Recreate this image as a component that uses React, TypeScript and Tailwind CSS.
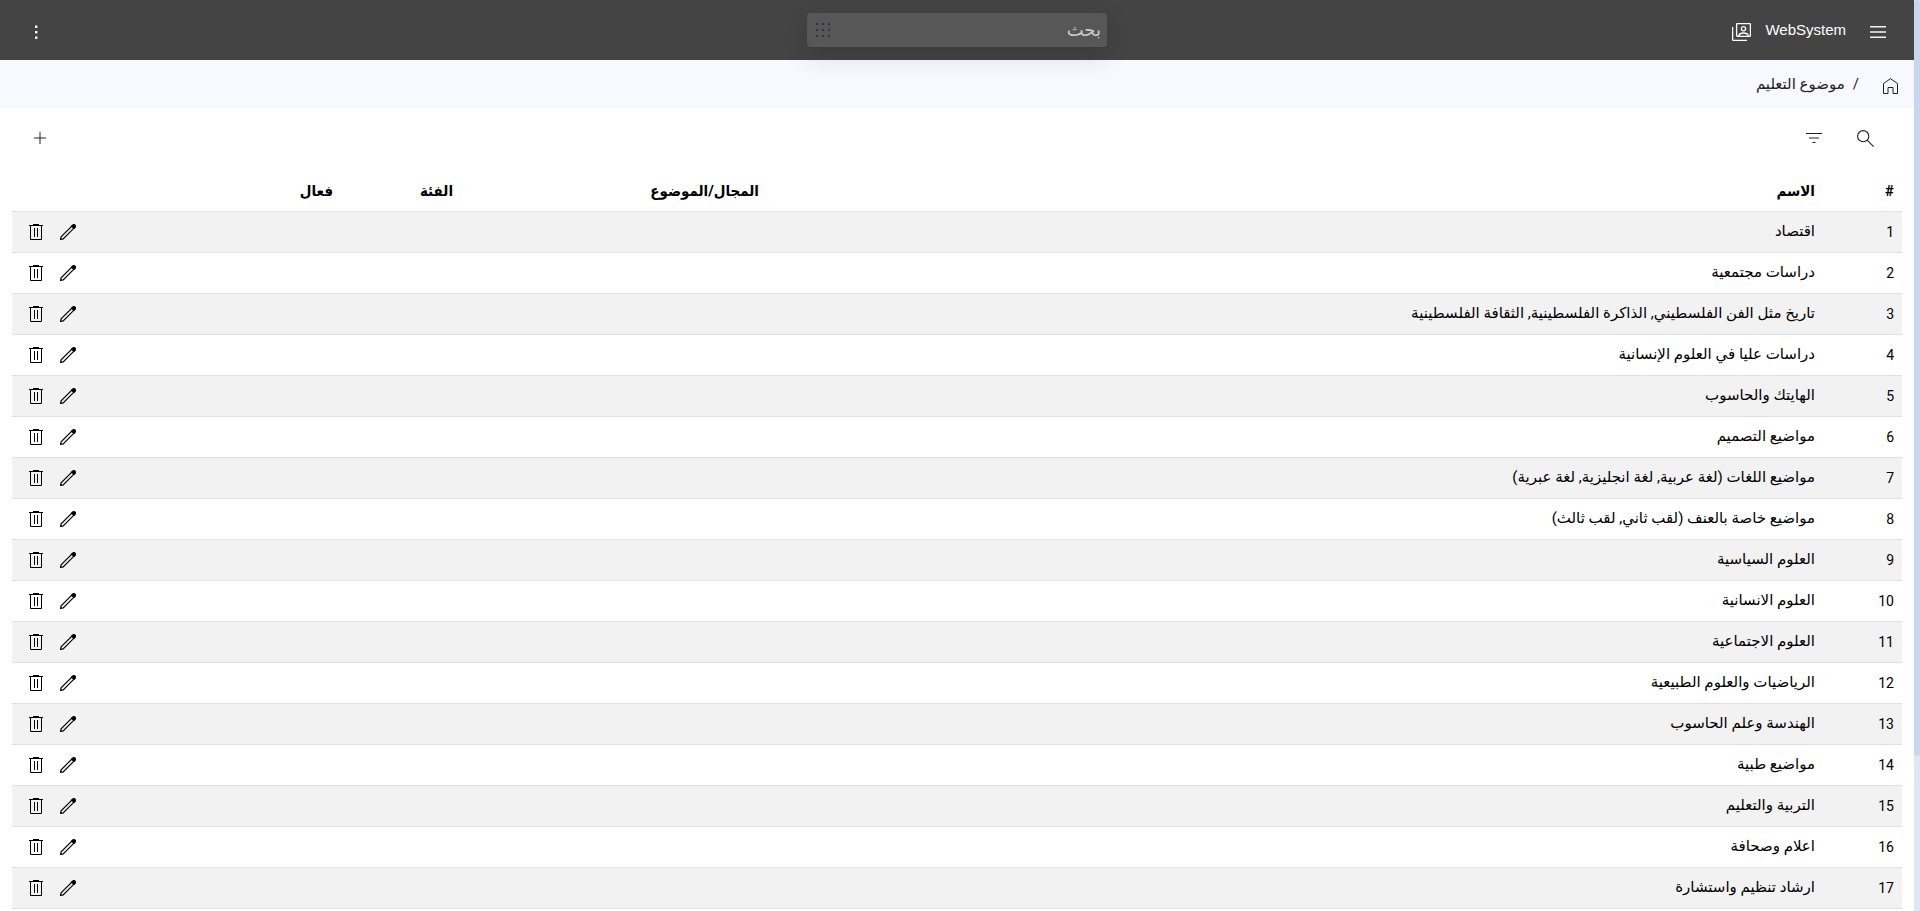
const FONT = "font-[Roboto,'DejaVu_Sans',sans-serif]";
const HEAD_FONT = "font-[Roboto,'DejaVu_Sans_Condensed','DejaVu_Sans',sans-serif]";

const subjects = [
  "اقتصاد",
  "دراسات مجتمعية",
  "تاريخ مثل الفن الفلسطيني, الذاكرة الفلسطينية, الثقافة الفلسطينية",
  "دراسات عليا في العلوم الإنسانية",
  "الهايتك والحاسوب",
  "مواضيع التصميم",
  "مواضيع اللغات (لغة عربية, لغة انجليزية, لغة عبرية)",
  "مواضيع خاصة بالعنف (لقب ثاني, لقب ثالث)",
  "العلوم السياسية",
  "العلوم الانسانية",
  "العلوم الاجتماعية",
  "الرياضيات والعلوم الطبيعية",
  "الهندسة وعلم الحاسوب",
  "مواضيع طبية",
  "التربية والتعليم",
  "اعلام وصحافة",
  "ارشاد تنظيم واستشارة",
];

function MenuIcon() {
  return (
    <svg width="16" height="12" viewBox="0 0 16 12" fill="none" stroke="#f2f2f2">
      <path d="M0 .8h16M0 6h16M0 11.2h16" strokeWidth="1.4" />
    </svg>
  );
}

function ContactsIcon() {
  return (
    <svg width="19" height="18" viewBox="0 0 19 18" fill="none" stroke="#fff" strokeWidth="1.3">
      <path d="M4.6 1.4q0-.8.8-.8h12.2q.8 0 .8.8v11.2q0 .8-.8.8H5.4q-.8 0-.8-.8z" />
      <path d="M.6 4v12.6q0 .8.8.8H15" />
      <circle cx="11.5" cy="5.8" r="2.1" />
      <path d="M6.5 13c.6-2 2.6-3 5-3s4.4 1 5 3" />
    </svg>
  );
}

function DotsIcon() {
  return (
    <svg width="16" height="16" viewBox="0 0 16 16" fill="#34343c">
      {[1, 7, 13].map((y) =>
        [1, 7, 13].map((x) => <rect key={`${x}-${y}`} x={x} y={y} width="2" height="2" />)
      )}
    </svg>
  );
}

function MoreIcon() {
  return (
    <svg width="4" height="14" viewBox="0 0 4 14" fill="#fff">
      <rect x="1" y="0.5" width="2.4" height="2.4" />
      <rect x="1" y="6" width="2.4" height="2.4" />
      <rect x="1" y="11.5" width="2.4" height="2.4" />
    </svg>
  );
}

function HomeIcon() {
  return (
    <svg width="15" height="16" viewBox="0 0 15 16" fill="none" stroke="#222">
      <path d="M.5 15.5V5.500L7.500.7l7 4.800v10H10v-6H5v6z" />
    </svg>
  );
}

function SearchIcon() {
  return (
    <svg width="17" height="17" viewBox="0 0 17 17" fill="none" stroke="#222" strokeWidth="1.1">
      <circle cx="6.2" cy="6.2" r="5.6" />
      <path d="M10.2 10.2l6.4 6.4" />
    </svg>
  );
}

function FilterIcon() {
  return (
    <svg width="16" height="10" viewBox="0 0 16 10" fill="none" stroke="#222">
      <path d="M0 .5h16M6.500 9.500h3" />
      <path d="M3 5h10" />
    </svg>
  );
}

function PlusIcon() {
  return (
    <svg width="12" height="12" viewBox="0 0 12 12" fill="none" stroke="#222">
      <path d="M6 0v12M0 6h12" />
    </svg>
  );
}

function TrashIcon() {
  return (
    <svg width="14" height="16" viewBox="0 0 14 16" fill="none" stroke="#000">
      <path d="M0 1.500h14M4 .5h6" />
      <path d="M1.500 1.500v14h11v-14M5.500 4v9M8.500 4v9" />
    </svg>
  );
}

function EditIcon() {
  return (
    <svg width="16" height="16" viewBox="0 0 16 16" fill="none" stroke="#000" strokeWidth="1.2">
      <path d="M.6 15.400l.5-2.600L12.400 1.500l2.100 2.100L3.200 14.900z" />
      <path d="M11.600 2.200l1.200-1.200q1.100-.9 2.200.1 1 1.100.1 2.200l-1.200 1.200z" fill="#000" />
    </svg>
  );
}

export default function App() {
  return (
    <div dir="rtl" className={`flex h-screen overflow-hidden bg-white text-[15px] text-black ${FONT}`}>
      {/* scroll track */}
      <div className="w-1.5 shrink-0 bg-[#dfe7f0]">
        <div className="h-[83%] rounded-[3px] bg-[#c9d7ee]" />
      </div>

      <div className="min-w-0 flex-1">
        <header className="grid h-15 grid-cols-[1fr_300px_1fr] items-center bg-[#444] px-7">
          <div className="flex items-center">
            <button aria-label="القائمة" className="pt-1">
              <MenuIcon />
            </button>
            <a href="#" className="flex items-center gap-3.5 pr-6 text-white">
              <span className="font-['Liberation_Sans',sans-serif]">WebSystem</span>
              <span className="pt-1">
                <ContactsIcon />
              </span>
            </a>
          </div>
          <div className="flex h-[34px] items-center rounded bg-[#575757] pr-1.5 pl-2 shadow-[0_8px_24px_rgba(0,0,0,0.16)]">
            <input
              type="text"
              aria-label="بحث"
              placeholder="بحث"
              className="min-w-0 flex-1 bg-transparent text-lg text-white outline-none placeholder:text-[#ccc]"
            />
            <button aria-label="التطبيقات">
              <DotsIcon />
            </button>
          </div>
          <button aria-label="المزيد" className="ml-1.5 justify-self-end pt-1">
            <MoreIcon />
          </button>
        </header>

        <nav className="flex h-12 items-center bg-[#f8f9ff] pt-1 pr-4 text-[#222]">
          <a href="#" aria-label="الرئيسية">
            <HomeIcon />
          </a>
          <span className="pr-6 pb-1">/</span>
          <span className="pr-2 pb-1">موضوع التعليم</span>
        </nav>

        <div className="flex h-[62px] items-center pr-10 pb-0.5 pl-[34px]">
          <button aria-label="بحث">
            <SearchIcon />
          </button>
          <button aria-label="تصفية" className="mr-[35px]">
            <FilterIcon />
          </button>
          <button aria-label="إضافة" className="mr-auto">
            <PlusIcon />
          </button>
        </div>

        <div className="px-3">
          <table className="w-full table-fixed border-collapse text-right">
            <thead className={HEAD_FONT}>
              <tr className="h-[41px] border-b border-[#dee0e2]">
                <th className="w-[79px] px-2 pt-0.5">#</th>
                <th className="px-2 pt-0.5">الاسم</th>
                <th className="w-[306px] px-2 pt-0.5">المجال/الموضوع</th>
                <th className="w-[120px] px-2 pt-0.5">الفئة</th>
                <th className="w-[120px] px-2 pt-0.5">فعال</th>
                <th className="w-[209px] px-2 pt-0.5" />
              </tr>
            </thead>
            <tbody>
              {subjects.map((name, index) => (
                <tr key={name} className="h-[41px] border-b border-[#dee0e2] odd:bg-[#f2f2f2]">
                  <td className="px-2 text-sm">{index + 1}</td>
                  <td className="px-2">{name}</td>
                  <td />
                  <td />
                  <td />
                  <td className="pl-[17px]">
                    <div className="flex items-center justify-end gap-[17px]">
                      <button aria-label="تعديل">
                        <EditIcon />
                      </button>
                      <button aria-label="حذف">
                        <TrashIcon />
                      </button>
                    </div>
                  </td>
                </tr>
              ))}
            </tbody>
          </table>
        </div>
      </div>
    </div>
  );
}
